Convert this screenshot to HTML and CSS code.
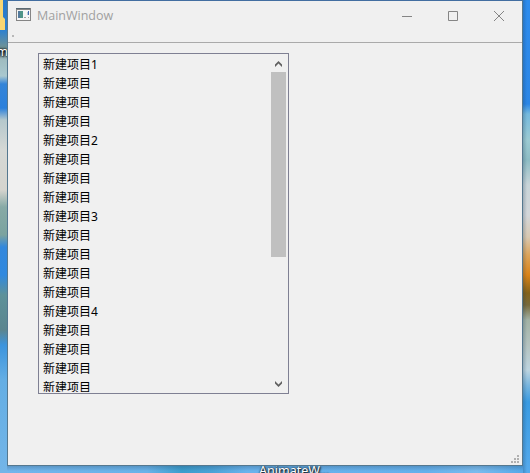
FILE: index.html
```html
<!DOCTYPE html>
<html lang="zh-CN">
<head>
<meta charset="utf-8">
<title>MainWindow</title>
<link rel="stylesheet" href="styles.css">
</head>
<body>
<div class="desktop">
  <div class="wall wall-left"></div>
  <div class="wall wall-right"></div>
  <div class="wall wall-bottom"></div>
  <div class="folder"></div>
  <div class="desk-label label-left">m</div>
  <div class="desk-label label-bottom">AnimateW...</div>
  <main class="window">
    <header class="titlebar">
      <svg class="app-icon" width="15" height="13" viewBox="0 0 15 13" shape-rendering="crispEdges">
        <path fill="#858585" d="M0 0h15v13H0z"/>
        <path fill="#f5f5f5" d="M1 2h13v10H1z"/>
        <path fill="#5b6a73" d="M0 0h14v1H0z"/>
        <path fill="#4e9387" d="M2 3h5v7H2z"/>
        <path fill="#547b9c" d="M2 3h2v7H2z"/>
        <path fill="#426bb0" d="M12 3h1v4h-1z"/>
        <path fill="#b4c8d8" d="M11 4h1v3h-1z"/>
        <path fill="#a0a0a0" d="M8 9h2v1H8zM12 9h1v1h-1z"/>
      </svg>
      <span class="title">MainWindow</span>
      <div class="controls">
        <svg width="10" height="10" viewBox="0 0 10 10"><path d="M0 5.5h10"/></svg>
        <svg width="10" height="10" viewBox="0 0 10 10"><path d="M.5.5h9v9h-9z"/></svg>
        <svg width="10" height="10" viewBox="0 0 10 10"><path d="M0 0l10 10M10 0L0 10"/></svg>
      </div>
    </header>
    <div class="toolbar"><i class="handle"></i></div>
    <section class="content">
      <div class="list">
        <ul class="items">
          <li>新建项目1</li><li>新建项目</li><li>新建项目</li><li>新建项目</li>
          <li>新建项目2</li><li>新建项目</li><li>新建项目</li><li>新建项目</li>
          <li>新建项目3</li><li>新建项目</li><li>新建项目</li><li>新建项目</li><li>新建项目</li>
          <li>新建项目4</li><li>新建项目</li><li>新建项目</li><li>新建项目</li><li>新建项目</li>
        </ul>
        <div class="scrollbar">
          <svg class="arrow" width="7" height="6" viewBox="0 0 7 6"><path d="M0 3.5L3.5 0 7 3.5V6L3.5 2.6 0 6z"/></svg>
          <div class="thumb"></div>
          <svg class="arrow arrow-down" width="7" height="6" viewBox="0 0 7 6"><path d="M0 0l3.5 3.4L7 0v2.5L3.5 6 0 2.5z"/></svg>
        </div>
      </div>
    </section>
    <footer class="statusbar">
      <svg width="8" height="8" viewBox="0 0 8 8" shape-rendering="crispEdges"><path fill="#b0b0b0" d="M6 0h2v2H6zM3 3h2v2H3zM6 3h2v2H6zM0 6h2v2H0zM3 6h2v2H3zM6 6h2v2H6z"/></svg>
    </footer>
  </main>
</div>
</body>
</html>
```
FILE: styles.css
```css
* { box-sizing: border-box; }
body { margin: 0; }
.desktop {
  position: relative;
  width: 530px;
  height: 473px;
  overflow: hidden;
  background: #63ace5;
  font-family: "Noto Sans", "Noto Sans CJK SC", sans-serif;
}
.wall { position: absolute; }
.wall-left {
  left: 0; top: 0; width: 8px; height: 473px;
  background: linear-gradient(#2878c8 0, #2c80d0 30px, #6d9297 47px, #9fbcc0 60px, #a9c8cf 76px, #3384d8 84px, #2b80dc 108px, #b5c8cc 120px, #d5d8d5 150px, #d5d4ce 190px, #87aaa6 207px, #7ba39f 235px, #3388dc 247px, #3089df 275px, #5d9199 295px, #5b858f 330px, #3c94dd 345px, #64aee4 380px, #73b5e8 473px);
}
.wall-right {
  left: 522px; top: 0; width: 8px; height: 473px;
  background:
    linear-gradient(90deg, rgba(20, 50, 80, .3), transparent 5px),
    linear-gradient(#2d8ced 0, #2b86e6 104px, #75b9dd 114px, #9ccad2 140px, #8dbcc4 160px, #c8d4d8 185px, #d3d6d9 215px, #d8c8b1 237px, #dca45a 255px, #d98318 275px, #83621a 293px, #776a3c 305px, #a2b2a5 320px, #b4c2bf 345px, #bdd4df 370px, #7ab6de 385px, #399be2 402px, #56aaec 473px);
}
.wall-bottom {
  left: 7px; top: 465px; width: 516px; height: 8px;
  background:
    linear-gradient(rgba(20, 50, 80, .28), transparent 6px),
    linear-gradient(90deg, #72b5eb 0, #69b2e8 140px, #3c9dcc 175px, #4ba2d6 205px, #6ab3ec 240px, #65b0eb 420px, #7abbed 470px, #56a8e8 516px);
}
.folder {
  position: absolute;
  left: 0; top: 0; width: 5px; height: 30px;
  background: #f8d673;
  clip-path: polygon(0 0, 3px 0, 3px 17px, 5px 19px, 5px 30px, 0 30px);
}
.desk-label {
  position: absolute;
  color: #fff;
  font-size: 12px;
  line-height: 16px;
  white-space: nowrap;
  text-shadow: 0 0 2px #000, 1px 1px 2px #000;
}
.label-left { right: 522px; top: 44px; text-shadow: 0 0 2px #000, 0 0 3px #000, 1px 1px 2px #000; }
.label-bottom { left: 259px; top: 463px; font-size: 12.5px; }
.window {
  position: relative;
  display: flex;
  flex-direction: column;
  width: 516px;
  height: 466px;
  margin-left: 7px;
  background: #f0f0f0;
  border: 1px solid #55788f;
  border-top-color: #426ea1;
}
.titlebar {
  display: flex;
  align-items: center;
  height: 29px;
  padding: 0 18px 0 8px;
}
.app-icon {
  display: block;
  margin-bottom: 2px;
}
.title {
  margin-left: 6px;
  color: #a0a0a0;
  font-family: "Open Sans", sans-serif;
  font-size: 12.5px;
  line-height: 18px;
}
.controls {
  display: flex;
  gap: 36px;
  margin-left: auto;
}
.controls svg {
  fill: none;
  stroke: #858585;
}
.toolbar {
  height: 13px;
  padding: 5px 4px;
  border-bottom: 1px solid #aaa;
}
.handle {
  display: block;
  width: 2px;
  height: 2px;
  background: #b8b8b8;
}
.content {
  flex: 1;
  padding: 10px 30px;
}
.list {
  display: flex;
  width: 251px;
  height: 341px;
  padding: 1px 2px 1px 1px;
  border: 1px solid #7f8093;
}
.items {
  flex: 1;
  margin: 0;
  padding: 0 3px;
  overflow: hidden;
  list-style: none;
  color: #000;
  font-size: 12px;
}
.items li {
  height: 19px;
  line-height: 19px;
  white-space: nowrap;
}
.scrollbar {
  display: flex;
  flex-direction: column;
  align-items: center;
  width: 15px;
  padding: 6px 0 5px;
}
.arrow { fill: #606060; }
.thumb {
  width: 15px;
  height: 185px;
  margin-top: 5px;
  background: #c0c0c0;
}
.arrow-down { margin-top: auto; }
.statusbar {
  display: flex;
  justify-content: flex-end;
  height: 11px;
  padding: 1px 3px;
}
```
